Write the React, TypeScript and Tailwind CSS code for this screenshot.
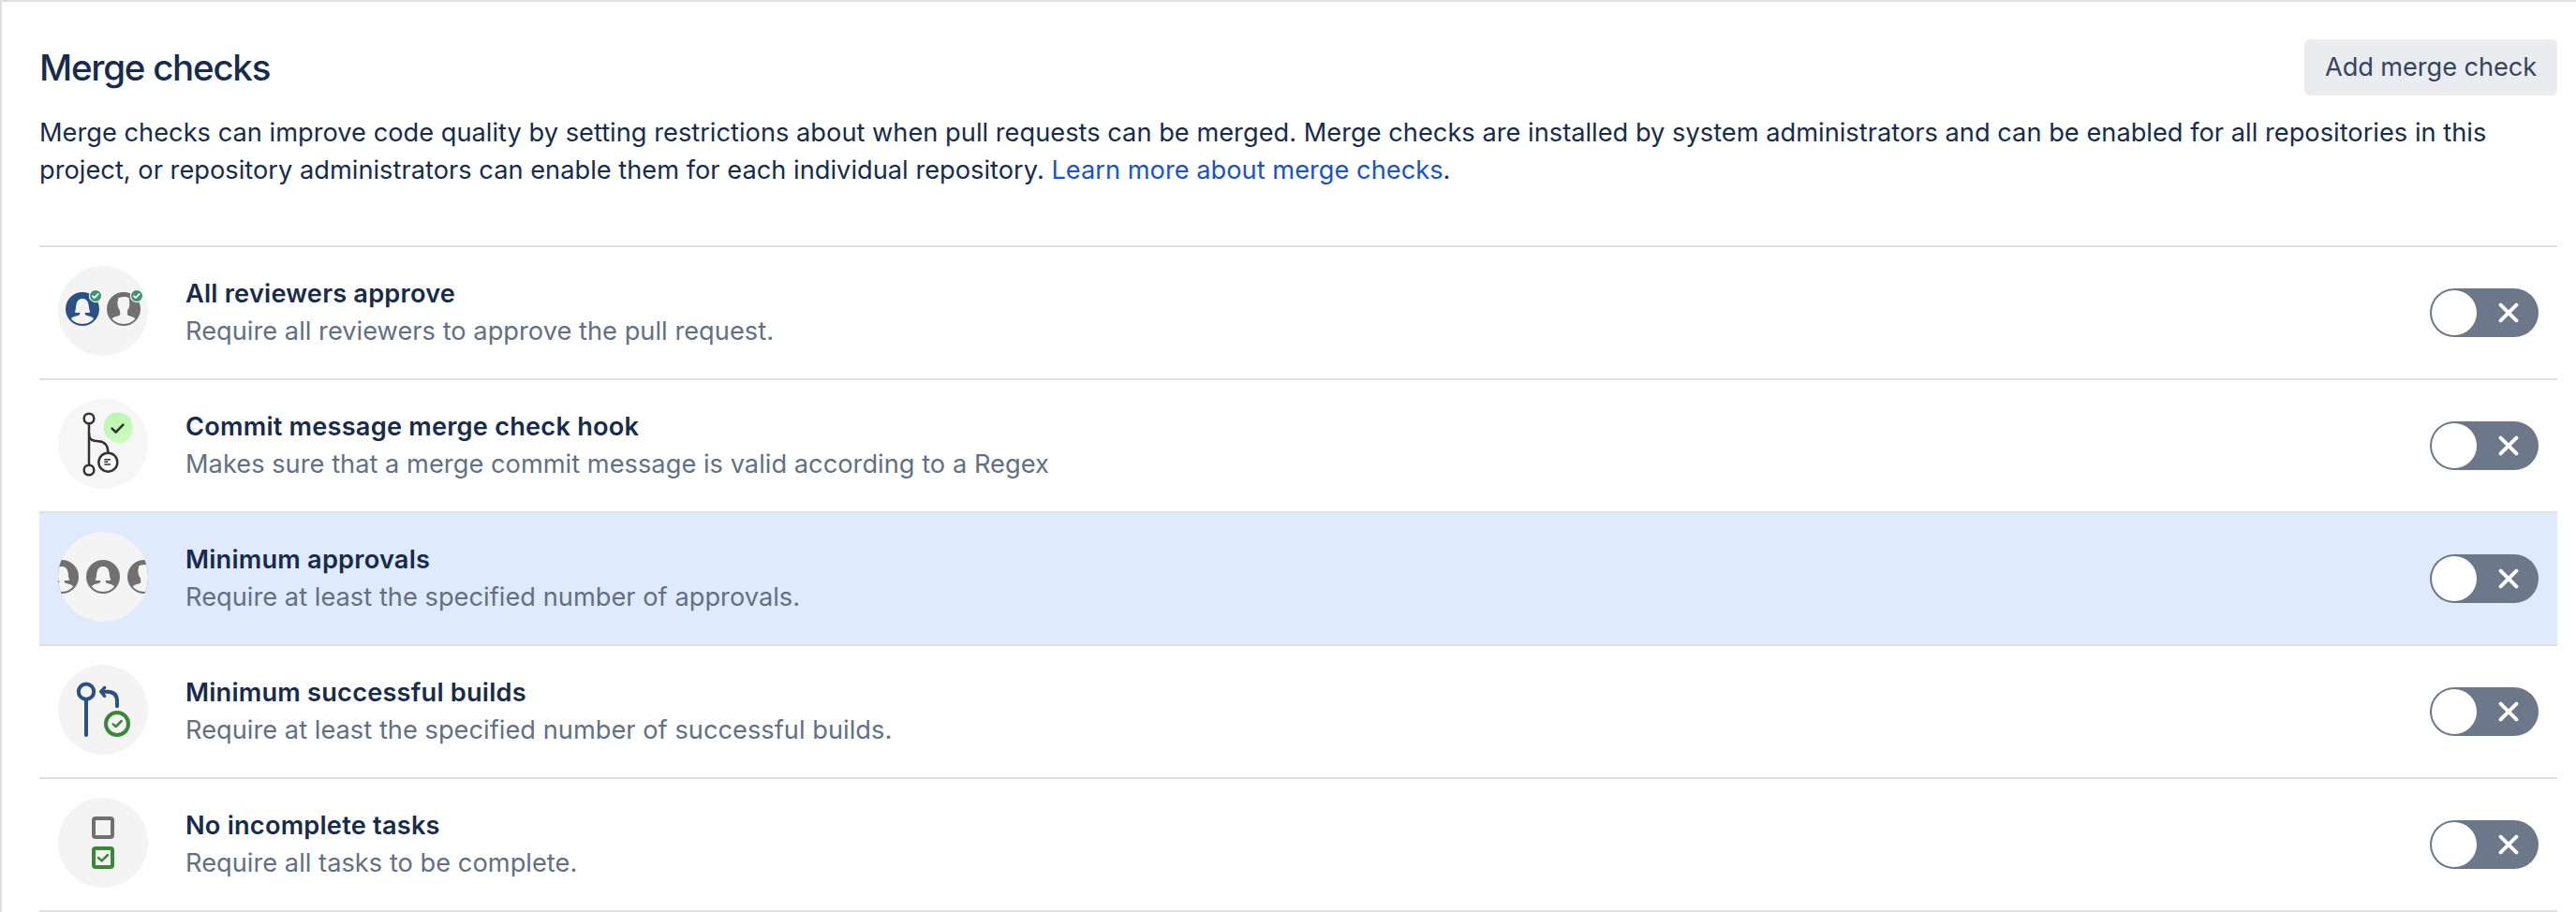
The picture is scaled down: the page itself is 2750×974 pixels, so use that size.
import type { ReactNode } from "react";

type Check = {
  title: string;
  description: string;
  icon: ReactNode;
  highlighted?: boolean;
};

function Woman({ x, y, color }: { x: number; y: number; color: string }) {
  return (
    <g transform={`translate(${x} ${y})`}>
      <circle r="54" fill={color} />
      <path
        fill="#f4f4f4"
        d="M-25 9C-20 4-22-7-19-17C-16-29-9-33 0-33S16-29 19-17C22-7 20 4 25 9C23 13 14 13 8 11L9 18C14 23 29 22 36 31C28 43 14 48 0 48S-28 43-36 31C-29 22-14 23-9 18L-8 11C-14 13-23 13-25 9Z"
      />
    </g>
  );
}

function Man({ x, y, color }: { x: number; y: number; color: string }) {
  return (
    <g transform={`translate(${x} ${y})`}>
      <circle r="54" fill={color} />
      <path
        fill="#f4f4f4"
        d="M-18-35C-12-37-6-40 3-39C13-39 20-36 18-26L19-12C18-5 15 1 12 5L12 19C17 24 30 23 37 31C28 43 14 48 0 48S-28 43-37 31C-30 23-16 24-11 19L-12 5C-15 1-18-5-19-12L-20-20C-20-25-16-28-18-35Z"
      />
    </g>
  );
}

function ApprovedBadge({ x, y }: { x: number; y: number }) {
  return (
    <g transform={`translate(${x} ${y})`}>
      <circle r="21.5" fill="#f8f8f8" />
      <circle r="18" fill="#3f9272" />
      <path d="M-9 1L-3 6L8-6" fill="none" stroke="#fff" strokeWidth="5.5" strokeLinecap="round" strokeLinejoin="round" />
    </g>
  );
}

const iconClass = "size-24 shrink-0 rounded-full bg-[#f4f4f4]";

const reviewersIcon = (
  <svg className={iconClass} viewBox="66 42 288 288">
    <Woman x={144} y={180} color="#2b5184" />
    <Man x={276} y={180} color="#707070" />
    <ApprovedBadge x={186} y={138} />
    <ApprovedBadge x={318} y={138} />
  </svg>
);

const commitIcon = (
  <svg className="size-24 shrink-0 rounded-full bg-[#f6f6f6]" viewBox="66 48 288 288" fill="none">
    <defs>
      <linearGradient id="blob" x1="0" y1="0" x2="0.3" y2="1">
        <stop offset="0" stopColor="#b9f5ab" />
        <stop offset="1" stopColor="#cbfcbf" />
      </linearGradient>
    </defs>
    <path
      fill="url(#blob)"
      d="M238 95C250 91 270 91 282 98C298 106 305 122 305 142C304 162 296 178 279 186C268 191 256 191 244 185C224 176 212 160 212 140C212 120 222 102 238 95Z"
    />
    <g stroke="#343434" strokeWidth="7.5">
      <circle cx="165" cy="111" r="16" fill="#fafafa" />
      <circle cx="165" cy="276" r="16" fill="#fafafa" />
      <path d="M165 127V260" />
      <path d="M165 158C165 182 180 183 195 184C215 185 226 196 226 221" />
      <circle cx="226" cy="251" r="30" fill="#fafafa" />
      <path d="M214 242H234M214 250H226M214 258H234" strokeWidth="4.5" />
      <path d="M239 143L251 155L274 131" strokeWidth="8" strokeLinecap="round" strokeLinejoin="round" />
    </g>
  </svg>
);

const approvalsIcon = (
  <svg className={iconClass} viewBox="66 54 288 288">
    <Woman x={78} y={198} color="#707070" />
    <Woman x={210} y={198} color="#707070" />
    <Man x={342} y={198} color="#707070" />
  </svg>
);

const buildsIcon = (
  <svg className={iconClass} viewBox="66 45 288 288" fill="none" strokeLinecap="round" strokeLinejoin="round">
    <g stroke="#2b5184" strokeWidth="12">
      <circle cx="156" cy="131" r="24.5" />
      <path d="M156 160V270" />
      <path d="M206 131H226C246 132 255 143 255 162V178" />
      <path d="M215 118L203 131L215 145" strokeWidth="10" />
    </g>
    <g stroke="#3b8735">
      <circle cx="255" cy="234" r="36" strokeWidth="12" />
      <path d="M242 235L251 243L269 225" strokeWidth="7.5" />
    </g>
  </svg>
);

const tasksIcon = (
  <svg className={iconClass} viewBox="66 36 288 288" fill="none">
    <rect x="180" y="102" width="60" height="60" rx="6" stroke="#707070" strokeWidth="12" />
    <rect x="180" y="198" width="60" height="60" rx="6" stroke="#3b8735" strokeWidth="12" />
    <path d="M195 228L206 238L225 219" stroke="#3b8735" strokeWidth="7.5" strokeLinecap="round" strokeLinejoin="round" />
  </svg>
);

const checks: Check[] = [
  {
    title: "All reviewers approve",
    description: "Require all reviewers to approve the pull request.",
    icon: reviewersIcon,
  },
  {
    title: "Commit message merge check hook",
    description: "Makes sure that a merge commit message is valid according to a Regex",
    icon: commitIcon,
  },
  {
    title: "Minimum approvals",
    description: "Require at least the specified number of approvals.",
    icon: approvalsIcon,
    highlighted: true,
  },
  {
    title: "Minimum successful builds",
    description: "Require at least the specified number of successful builds.",
    icon: buildsIcon,
  },
  {
    title: "No incomplete tasks",
    description: "Require all tasks to be complete.",
    icon: tasksIcon,
  },
];

function Toggle({ label }: { label: string }) {
  return (
    <button
      type="button"
      role="switch"
      aria-checked="false"
      aria-label={label}
      className="flex h-[52px] w-[116px] shrink-0 items-center justify-between rounded-full bg-[#6c778a] pr-[21px] pl-0.5"
    >
      <span className="size-12 rounded-full bg-white" />
      <svg className="size-[22px]" viewBox="0 0 22 22" fill="none" stroke="#fff" strokeWidth="4" strokeLinecap="round">
        <path d="M2.6 2.6L19.4 19.4M19.4 2.6L2.6 19.4" />
      </svg>
    </button>
  );
}

function CheckRow({ check }: { check: Check }) {
  return (
    <li
      className={`flex h-[142px] items-center border-b-2 border-[#dfe0e6] px-5 ${
        check.highlighted ? "bg-[#dfeafd]" : ""
      }`}
    >
      <div className="-mt-1">{check.icon}</div>
      <div className="ml-10 flex-1 whitespace-nowrap text-[27.2px] leading-10">
        <h3 className="font-semibold tracking-[0.21px]">{check.title}</h3>
        <p className="tracking-[0.04px] text-[#626f86]">{check.description}</p>
      </div>
      <Toggle label={check.title} />
    </li>
  );
}

export default function App() {
  return (
    <main className="h-[974px] overflow-hidden border-t-2 border-l-2 border-[#dfe0e6] bg-white pt-10 pr-5 pl-10 font-['Inter',sans-serif] text-[#172b4d]">
      <header className="flex h-[60px] items-center justify-between">
        <h2 className="text-[38.5px] leading-[60px] font-medium tracking-[-1.25px]">Merge checks</h2>
        <button
          type="button"
          className="h-[60px] w-[270px] rounded-md bg-[#ebecf0] text-[27.2px] tracking-[-0.08px] text-[#344563]"
        >
          Add merge check
        </button>
      </header>
      <p className="mt-5 whitespace-nowrap text-[27.2px] leading-10 tracking-[0.03px]">
        Merge checks can improve code quality by setting restrictions about when pull requests can be merged. Merge
        checks are installed by system administrators and can be enabled for all repositories in this
        <br />
        project, or repository administrators can enable them for each individual repository.{" "}
        <a href="#merge-checks" className="text-[#1a53c6]">
          Learn more about merge checks
        </a>
        .
      </p>
      <ul className="mt-[60px] border-t-2 border-[#dfe0e6]">
        {checks.map((check) => (
          <CheckRow key={check.title} check={check} />
        ))}
      </ul>
    </main>
  );
}
